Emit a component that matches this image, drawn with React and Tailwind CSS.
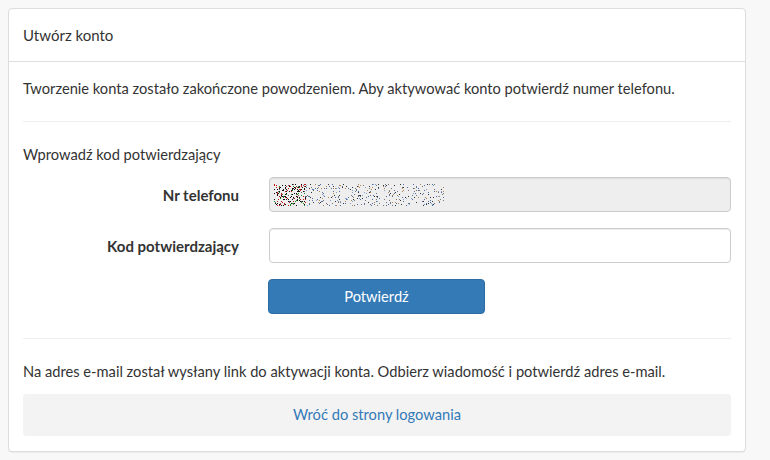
import React from 'react';

// pixel noise standing in for the redacted phone number
const noiseDots = (() => {
  let seed = 11;
  const rnd = () => {
    seed = (seed * 16807) % 2147483647;
    return seed / 2147483647;
  };
  const dots = [];
  for (let i = 0; i < 1100; i++) {
    const x = Math.floor(rnd() * 170);
    const y = Math.floor(rnd() * 22);
    const head = x < 32;
    const r = rnd();
    if (!head && r < 0.6) continue;
    let fill;
    if (head) {
      const c = rnd();
      fill = c < 0.45 ? '#111' : c < 0.7 ? '#c01818' : c < 0.88 ? '#1f8a1f' : '#666';
    } else {
      const c = rnd();
      fill = c < 0.3 ? '#4f6fa8' : c < 0.52 ? '#777' : c < 0.68 ? '#b08658' : c < 0.86 ? '#333' : '#7fa4cc';
    }
    dots.push({ x, y, fill });
  }
  return dots;
})();

const Redacted = () => (
  <svg width="170" height="22" viewBox="0 0 170 22" className="block" shapeRendering="crispEdges">
    {noiseDots.map((d, i) => (
      <rect key={i} x={d.x} y={d.y} width="1" height="1" fill={d.fill} />
    ))}
  </svg>
);

const FormRow = ({ label, children, className = '' }) => (
  <div className={`flex items-center ${className}`}>
    <label className="w-[216px] text-right font-bold text-[15px] text-[#333]">{label}</label>
    <div className="ml-[30px] flex-1">{children}</div>
  </div>
);

export default function App() {
  return (
    <div
      className="min-h-[460px] bg-[#f8f8f8] pt-[8px] pl-[8px] text-[14.66px] leading-[20px] text-[#333]"
      style={{ fontFamily: 'Lato, "Open Sans", sans-serif' }}
    >
      <div className="w-[738px] rounded-[4px] border border-[#ddd] bg-white shadow-[0_1px_1px_rgba(0,0,0,0.05)]">
        <div className="flex h-[53px] items-center border-b border-[#ddd] px-[14px] text-[15px]">Utwórz konto</div>

        <div className="px-[14px] pt-[17px] pb-[15px]">
          <p>Tworzenie konta zostało zakończone powodzeniem. Aby aktywować konto potwierdź numer telefonu.</p>
          <hr className="mt-[22px] border-[#eee]" />

          <p className="mt-[23px]">Wprowadź kod potwierdzający</p>

          <FormRow label="Nr telefonu" className="mt-[12px]">
            <div className="flex h-[35px] items-center rounded-[4px] border border-[#ccc] bg-[#eee] px-[4px] shadow-[inset_0_1px_1px_rgba(0,0,0,0.075)]">
              <Redacted />
            </div>
          </FormRow>

          <FormRow label="Kod potwierdzający" className="mt-[16px]">
            <input
              type="text"
              className="block h-[35px] w-full rounded-[4px] border border-[#ccc] bg-white px-[12px] shadow-[inset_0_1px_1px_rgba(0,0,0,0.075)] outline-none"
            />
          </FormRow>

          <div className="mt-[16px] flex">
            <div className="w-[245px]" />
            <button
              type="button"
              className="h-[35px] w-[217px] rounded-[4px] border border-[#2e6da4] bg-[#337ab7] text-white"
            >
              Potwierdź
            </button>
          </div>

          <hr className="mt-[24px] border-[#eee]" />

          <p className="mt-[23px]">Na adres e-mail został wysłany link do aktywacji konta. Odbierz wiadomość i potwierdź adres e-mail.</p>

          <div className="mt-[12px] flex h-[42px] items-center justify-center rounded-[3px] bg-[#f3f3f3]">
            <a href="#" className="text-[#337ab7]">Wróć do strony logowania</a>
          </div>
        </div>
      </div>
    </div>
  );
}
